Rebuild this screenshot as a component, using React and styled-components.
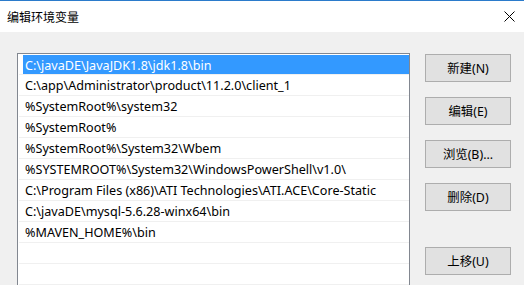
import React from 'react';
import styled, {createGlobalStyle} from 'styled-components';

const GlobalStyle = createGlobalStyle`
  html, body {
    margin: 0;
    padding: 0;
    background: #f0f0f0;
  }
  body {
    font-family: "Noto Sans", "Noto Sans CJK SC", sans-serif;
    font-size: 12px;
    color: #000;
  }
`

const Window = styled.div`
  width: 524px;
  height: 285px;
  display: flex;
  flex-direction: column;
  background: #f0f0f0;
  border-top: 1px solid #2b7bcb;
  box-sizing: border-box;
  overflow: hidden;
`

const TitleBar = styled.div`
  height: 31px;
  flex-shrink: 0;
  background: #fff;
  display: flex;
  align-items: center;
  justify-content: space-between;
  padding: 0 9px 0 7px;
`

const Title = styled.span`
  font-family: "Noto Sans CJK SC", sans-serif;
  font-size: 12px;
  color: #000;
`

const Close = styled.div`
  width: 12px;
  height: 12px;
  display: flex;
  align-items: center;
  justify-content: center;
`

const Body = styled.div`
  flex: 1;
  display: flex;
  padding: 21px 14px 0 17px;
  gap: 15px;
`

const List = styled.div`
  width: 390px;
  flex-shrink: 0;
  background: #fff;
  border: 1px solid #828790;
  border-bottom: none;
  padding-left: 1px;
  box-sizing: content-box;
  height: 240px;
`

const Row = styled.div`
  height: 20px;
  border-bottom: 1px solid #f0f0f0;
  display: flex;
  align-items: stretch;
  padding-left: 4px;
`

const Cell = styled.div`
  flex: 1;
  display: flex;
  align-items: center;
  padding: 1px 2px 0;
  margin: ${p => p.selected ? '1px 0 0' : '0'};
  background: ${p => p.selected ? '#3399ff' : 'transparent'};
  color: ${p => p.selected ? '#fff' : '#000'};
  white-space: nowrap;
  font-family: "Noto Sans", sans-serif;
  font-size: 12.6px;
`

const Buttons = styled.div`
  display: flex;
  flex-direction: column;
  gap: 15px;
  padding-top: 1px;
`

const Button = styled.button`
  width: 86px;
  height: 28px;
  margin-top: ${p => p.spaced ? '21px' : '0'};
  background: #e1e1e1;
  border: 1px solid #adadad;
  font-family: "Noto Sans", "Noto Sans CJK SC", sans-serif;
  font-size: 12.4px;
  color: #000;
  padding: 0;
`

const paths = [
  'C:\\javaDE\\JavaJDK1.8\\jdk1.8\\bin',
  'C:\\app\\Administrator\\product\\11.2.0\\client_1',
  '%SystemRoot%\\system32',
  '%SystemRoot%',
  '%SystemRoot%\\System32\\Wbem',
  '%SYSTEMROOT%\\System32\\WindowsPowerShell\\v1.0\\',
  'C:\\Program Files (x86)\\ATI Technologies\\ATI.ACE\\Core-Static',
  'C:\\javaDE\\mysql-5.6.28-winx64\\bin',
  '%MAVEN_HOME%\\bin',
  '',
  '',
]

export default function App() {
  return (
    <Window>
      <GlobalStyle />
      <TitleBar>
        <Title>编辑环境变量</Title>
        <Close>
          <svg width="11" height="11" viewBox="0 0 11 11">
            <path d="M0.5 0.5 L10.5 10.5 M10.5 0.5 L0.5 10.5" stroke="#000" strokeWidth="1" />
          </svg>
        </Close>
      </TitleBar>
      <Body>
        <List>
          {paths.map((p, i) =>
            <Row key={i}>
              <Cell selected={i === 0}>{p}</Cell>
            </Row>
          )}
        </List>
        <Buttons>
          <Button>新建(N)</Button>
          <Button>编辑(E)</Button>
          <Button>浏览(B)...</Button>
          <Button>删除(D)</Button>
          <Button spaced>上移(U)</Button>
        </Buttons>
      </Body>
    </Window>
  );
}
